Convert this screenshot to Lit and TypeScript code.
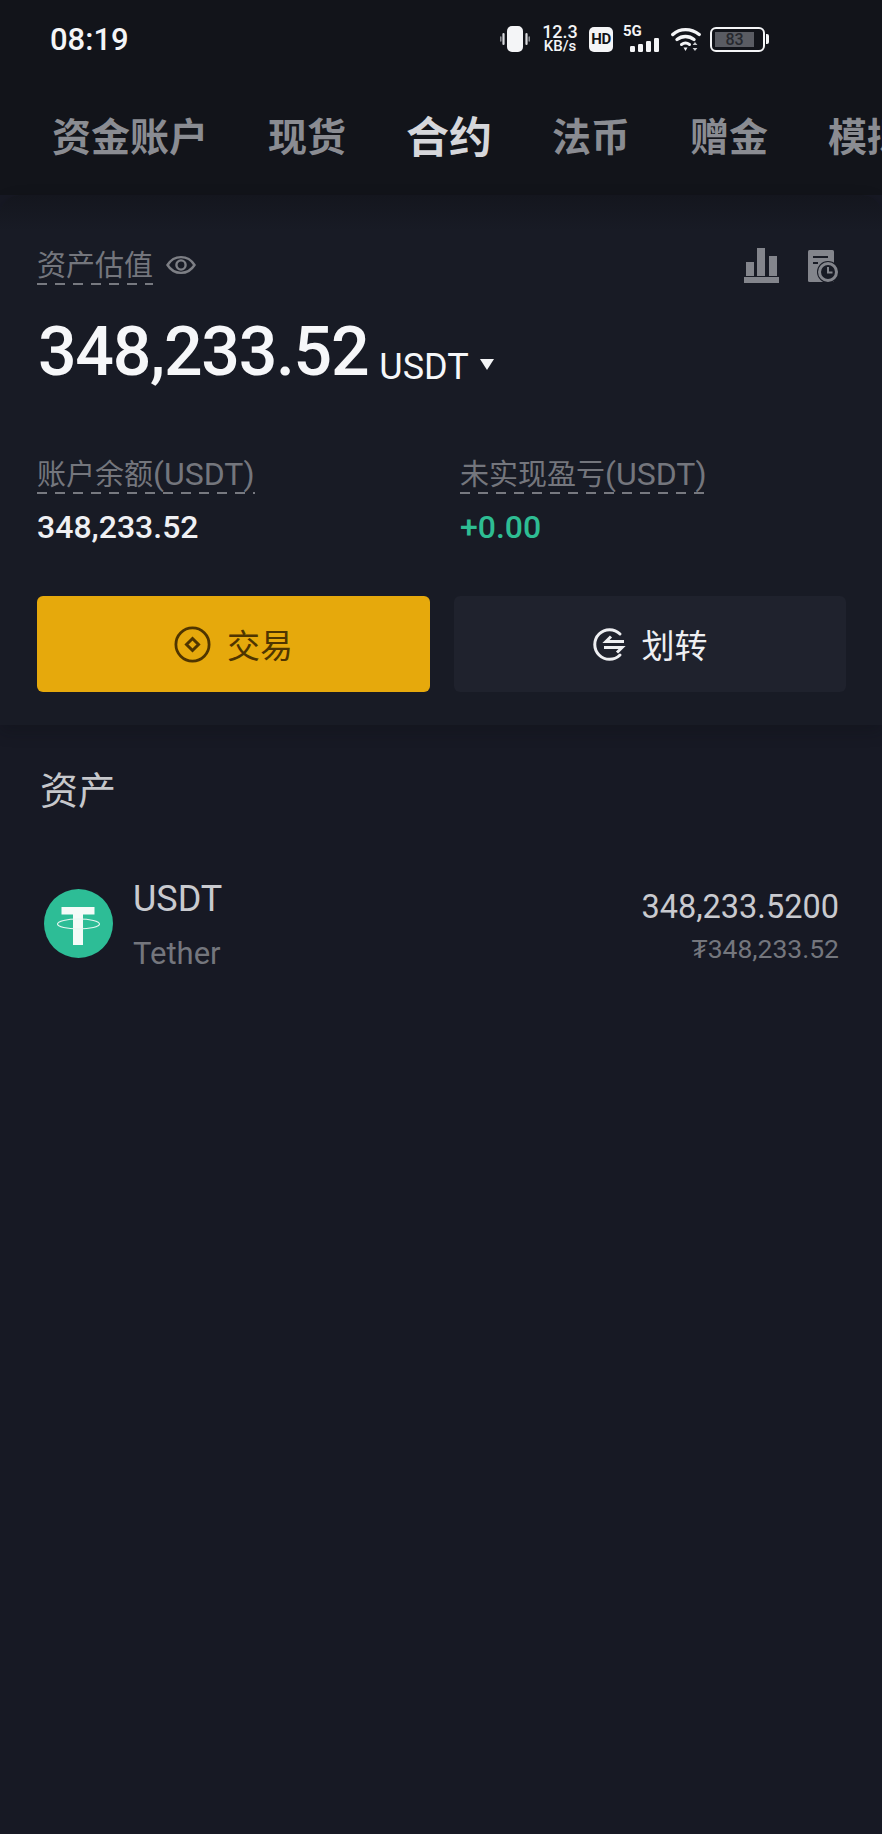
import { LitElement, css, html } from "lit";
import { customElement } from "lit/decorators.js";

const TABS = ["资金账户", "现货", "合约", "法币", "赠金", "模拟交易"];

@customElement("app-root")
export class AppRoot extends LitElement {
  private statusBar() {
    return html`
      <div class="status">
        <span class="time">08:19</span>
        <div class="status-icons">
          <svg class="vib" width="30" height="26" viewBox="0 0 30 26">
            <rect x="7" y="0" width="16" height="26" rx="5" fill="#f4f5f7" />
            <path d="M3.5 8v10M26.5 8v10" stroke="#d8d9dc" stroke-width="2.2" stroke-linecap="round" />
            <path d="M.8 11v4M29.2 11v4" stroke="#9a9ca1" stroke-width="1.4" stroke-linecap="round" />
          </svg>
          <div class="speed"><span>12.3</span><span class="unit">KB/s</span></div>
          <span class="hd">HD</span>
          <div class="signal">
            <span>5G</span>
            <svg width="30" height="14" viewBox="0 0 30 14">
              <rect x="0" y="8" width="5" height="6" rx="1.2" fill="#f4f5f7" />
              <rect x="8" y="6" width="5" height="8" rx="1.2" fill="#f4f5f7" />
              <rect x="16" y="3" width="5" height="11" rx="1.2" fill="#f4f5f7" />
              <rect x="24" y="0" width="5" height="14" rx="1.2" fill="#f4f5f7" />
            </svg>
          </div>
          <svg class="wifi" width="30" height="24" viewBox="0 0 30 24">
            <path d="M1.8 7.500C9 1 20 1 28.200 7.500" fill="none" stroke="#f4f5f7" stroke-width="3.400" stroke-linecap="round" />
            <path d="M6 12.500C11 8.500 18 8.500 23 12.500" fill="none" stroke="#f4f5f7" stroke-width="3.400" stroke-linecap="round" />
            <path d="M10.500 17.500c2.600-2 5.400-2 8 0" fill="none" stroke="#f4f5f7" stroke-width="3" stroke-linecap="round" />
            <path d="M12.500 20.500h4L14.500 24z" fill="#f4f5f7" />
            <path d="M24 15l2.400 3h-4.800zM24 24l2.400-3h-4.800z" fill="#c9cacd" />
          </svg>
          <div class="battery">
            <div class="battery-body"><span class="battery-fill">83</span></div>
            <i class="battery-nub"></i>
          </div>
        </div>
      </div>
    `;
  }

  render() {
    return html`
      <div class="top">
        ${this.statusBar()}
        <nav class="tabs">
          ${TABS.map((t) => html`<span class=${t === "合约" ? "tab active" : "tab"}>${t}</span>`)}
        </nav>
      </div>

      <section class="card">
        <div class="card-head">
          <div class="title">
            <span class="label">资产估值</span>
            <svg width="30" height="22" viewBox="0 0 30 22" fill="none" stroke="#7d7f85" stroke-width="2.400">
              <path d="M1.500 11C8 .5 22 .5 28.500 11 22 21.500 8 21.500 1.500 11z" />
              <circle cx="15" cy="11" r="4.600" />
            </svg>
          </div>
          <div class="head-icons">
            <svg width="35" height="36" viewBox="0 0 35 36" fill="#83858c">
              <rect x="2" y="15" width="8" height="14" />
              <rect x="13" y="1" width="8" height="28" />
              <rect x="25" y="9" width="8" height="20" />
              <rect x="0" y="30" width="35" height="6" />
            </svg>
            <svg width="31" height="33" viewBox="0 0 31 33">
              <rect x="0" y="0" width="26" height="32" rx="1.500" fill="#83858c" />
              <path d="M5 7h15M5 13h5" stroke="#181b25" stroke-width="2" />
              <circle cx="20" cy="22" r="11" fill="#181b25" />
              <circle cx="20" cy="22" r="8.500" fill="none" stroke="#83858c" stroke-width="3" />
              <path d="M20 17v5.500h4.500" fill="none" stroke="#83858c" stroke-width="2" />
            </svg>
          </div>
        </div>

        <div class="total">
          <span class="total-num">348,233.52</span>
          <span class="total-unit">USDT</span>
          <svg width="14" height="11" viewBox="0 0 14 11"><path d="M0 0h14L7 11z" fill="#f4f5f7" /></svg>
        </div>

        <div class="metrics">
          <div>
            <span class="label">账户余额<span class="latin">(USDT)</span></span>
            <div class="metric-val">348,233.52</div>
          </div>
          <div>
            <span class="label">未实现盈亏<span class="latin">(USDT)</span></span>
            <div class="metric-val green">+0.00</div>
          </div>
        </div>

        <div class="actions">
          <button class="btn primary">
            <svg width="37" height="37" viewBox="0 0 37 37" fill="none" stroke="#4f3500" stroke-width="2.800">
              <circle cx="18.500" cy="18.500" r="16.600" />
              <path d="M18.500 12.500l6 6-6 6-6-6z" stroke-width="3" />
            </svg>
            交易
          </button>
          <button class="btn secondary">
            <svg width="33" height="33" viewBox="0 0 33 33" fill="none" stroke="#eeeff2" stroke-width="3">
              <path d="M27 6A14.800 14.800 0 1 0 27 27" stroke-linecap="round" />
              <path d="M31 13.500H13l5-5" />
              <path d="M11 19.500h18l-5 5" />
            </svg>
            划转
          </button>
        </div>
      </section>

      <section class="assets">
        <h2>资产</h2>
        <div class="asset">
          <svg class="coin" width="69" height="69" viewBox="0 0 69 69">
            <circle cx="34.500" cy="34.500" r="34.500" fill="#2dbd96" />
            <path d="M17.500 18h33v7.500H39V56H29V25.500H17.500z" fill="#f4fbf8" />
            <ellipse cx="34.500" cy="35" rx="21" ry="5" fill="none" stroke="#e4f6f0" stroke-width="1.200" />
          </svg>
          <div class="asset-name">
            <span class="sym">USDT</span>
            <span class="full">Tether</span>
          </div>
          <div class="asset-val">
            <span class="amount">348,233.5200</span>
            <span class="fiat">₮348,233.52</span>
          </div>
        </div>
      </section>
    `;
  }

  static styles = css`
    :host {
      display: block;
      width: 882px;
      height: 1834px;
      overflow: hidden;
      background: #171924;
      font-family: Roboto, "Noto Sans CJK SC", sans-serif;
    }
    .top {
      height: 195px;
      background: #12141a;
      overflow: hidden;
    }
    .status {
      display: flex;
      align-items: center;
      justify-content: space-between;
      height: 78px;
      padding: 0 113px 0 50px;
    }
    .time {
      color: #f4f5f7;
      font-size: 31px;
      font-weight: 500;
    }
    .status-icons {
      display: flex;
      align-items: center;
      height: 26px;
      color: #f4f5f7;
    }
    .speed {
      display: flex;
      flex-direction: column;
      align-items: center;
      width: 36px;
      margin-left: 12px;
      font-size: 18px;
      font-weight: 500;
      line-height: 15px;
    }
    .speed .unit {
      font-size: 15px;
    }
    .hd {
      display: flex;
      align-items: center;
      justify-content: center;
      width: 24px;
      height: 25px;
      margin-left: 11px;
      border-radius: 5px;
      background: #f4f5f7;
      color: #111318;
      font-size: 15px;
      font-weight: 700;
      letter-spacing: -0.5px;
    }
    .signal {
      display: flex;
      flex-direction: column;
      width: 37px;
      margin-left: 10px;
      font-size: 15px;
      font-weight: 700;
      line-height: 11px;
    }
    .signal svg {
      align-self: flex-end;
      margin-top: 1px;
    }
    .wifi {
      margin-left: 11px;
    }
    .battery {
      display: flex;
      align-items: center;
      margin-left: 9px;
    }
    .battery-body {
      box-sizing: border-box;
      width: 55px;
      height: 25px;
      padding: 3px 9px 3px 3px;
      border: 2px solid #f4f5f7;
      border-radius: 6px;
    }
    .battery-fill {
      display: block;
      height: 100%;
      background: #5a5c63;
      color: #26282e;
      font-size: 16px;
      font-weight: 500;
      line-height: 15px;
      text-align: center;
    }
    .battery-nub {
      width: 3px;
      height: 10px;
      margin-left: 1px;
      border-radius: 0 2px 2px 0;
      background: #f4f5f7;
    }
    .tabs {
      display: flex;
      align-items: center;
      gap: 60px;
      height: 40px;
      margin-top: 36px;
      padding-left: 52px;
      font-family: "Noto Sans CJK SC", sans-serif;
    }
    .tab {
      flex-shrink: 0;
      color: #8a8c92;
      font-size: 39px;
      font-weight: 700;
      line-height: 40px;
    }
    .tab.active {
      color: #d6d7db;
      font-size: 43px;
    }
    .card {
      box-sizing: border-box;
      height: 530px;
      padding: 55px 37px 0;
      border-radius: 20px 20px 0 0;
      background: linear-gradient(#14161e 0, #181b25 36px);
      box-shadow: 0 6px 16px rgba(12, 13, 18, 0.28);
    }
    .card-head {
      display: flex;
      align-items: flex-start;
      justify-content: space-between;
    }
    .title {
      display: flex;
      align-items: flex-start;
      gap: 13px;
    }
    .title svg {
      margin-top: 4px;
    }
    .head-icons {
      display: flex;
      align-items: flex-start;
      gap: 29px;
      margin: -3px 6px 0 0;
    }
    .head-icons svg:last-child {
      margin-top: 3px;
    }
    .label {
      display: inline-block;
      padding-bottom: 3px;
      background: repeating-linear-gradient(90deg, #777980 0 10px, transparent 10px 18px) left bottom / 100% 2px no-repeat;
      color: #74767d;
      font-size: 29px;
      line-height: 32px;
    }
    .latin {
      font-size: 32px;
    }
    .total {
      display: flex;
      align-items: baseline;
      margin-top: 32px;
      padding-left: 1px;
      color: #f6f7f9;
    }
    .total-num {
      font-size: 68px;
      font-weight: 500;
      line-height: 70px;
      letter-spacing: -1.3px;
    }
    .total-unit {
      margin-left: 11px;
      font-size: 36px;
      transform: translateY(4px);
    }
    .total svg {
      margin-left: 11px;
      align-self: center;
      transform: translateY(12px);
    }
    .metrics {
      display: grid;
      grid-template-columns: 423px 1fr;
      margin-top: 71px;
    }
    .metric-val {
      margin-top: 15px;
      color: #eff0f3;
      font-size: 32px;
      font-weight: 500;
      line-height: 36px;
    }
    .metric-val.green {
      color: #2ebd93;
    }
    .actions {
      display: grid;
      grid-template-columns: 393px 392px;
      gap: 24px;
      margin-top: 51px;
    }
    .btn {
      display: flex;
      align-items: center;
      justify-content: center;
      gap: 16px;
      height: 96px;
      padding: 0;
      border: none;
      border-radius: 6px;
      font-family: "Noto Sans CJK SC", sans-serif;
      font-size: 33px;
    }
    .btn.primary {
      background: #e6a90c;
      color: #4f3500;
    }
    .btn.secondary {
      background: #1f222d;
      color: #eeeff2;
    }
    .assets {
      padding: 0 43px 0 44px;
    }
    h2 {
      margin: 39px 0 0 -4px;
      color: #c6c7cb;
      font-family: "Noto Sans CJK SC", sans-serif;
      font-size: 38px;
      font-weight: 400;
      line-height: 48px;
    }
    .asset {
      display: flex;
      align-items: center;
      margin-top: 62px;
    }
    .coin {
      flex-shrink: 0;
    }
    .asset-name {
      display: flex;
      flex-direction: column;
      gap: 17px;
      margin: 5px 0 0 20px;
    }
    .sym {
      color: #c9cacf;
      font-size: 36px;
      line-height: 40px;
    }
    .full {
      color: #74767d;
      font-size: 31px;
      line-height: 36px;
    }
    .asset-val {
      display: flex;
      flex-direction: column;
      align-items: flex-end;
      gap: 6px;
      margin: 5px 0 0 auto;
    }
    .amount {
      color: #c9cacf;
      font-size: 32.500px;
      line-height: 40px;
    }
    .fiat {
      color: #74767d;
      font-size: 26.500px;
      line-height: 32px;
    }
  `;
}
